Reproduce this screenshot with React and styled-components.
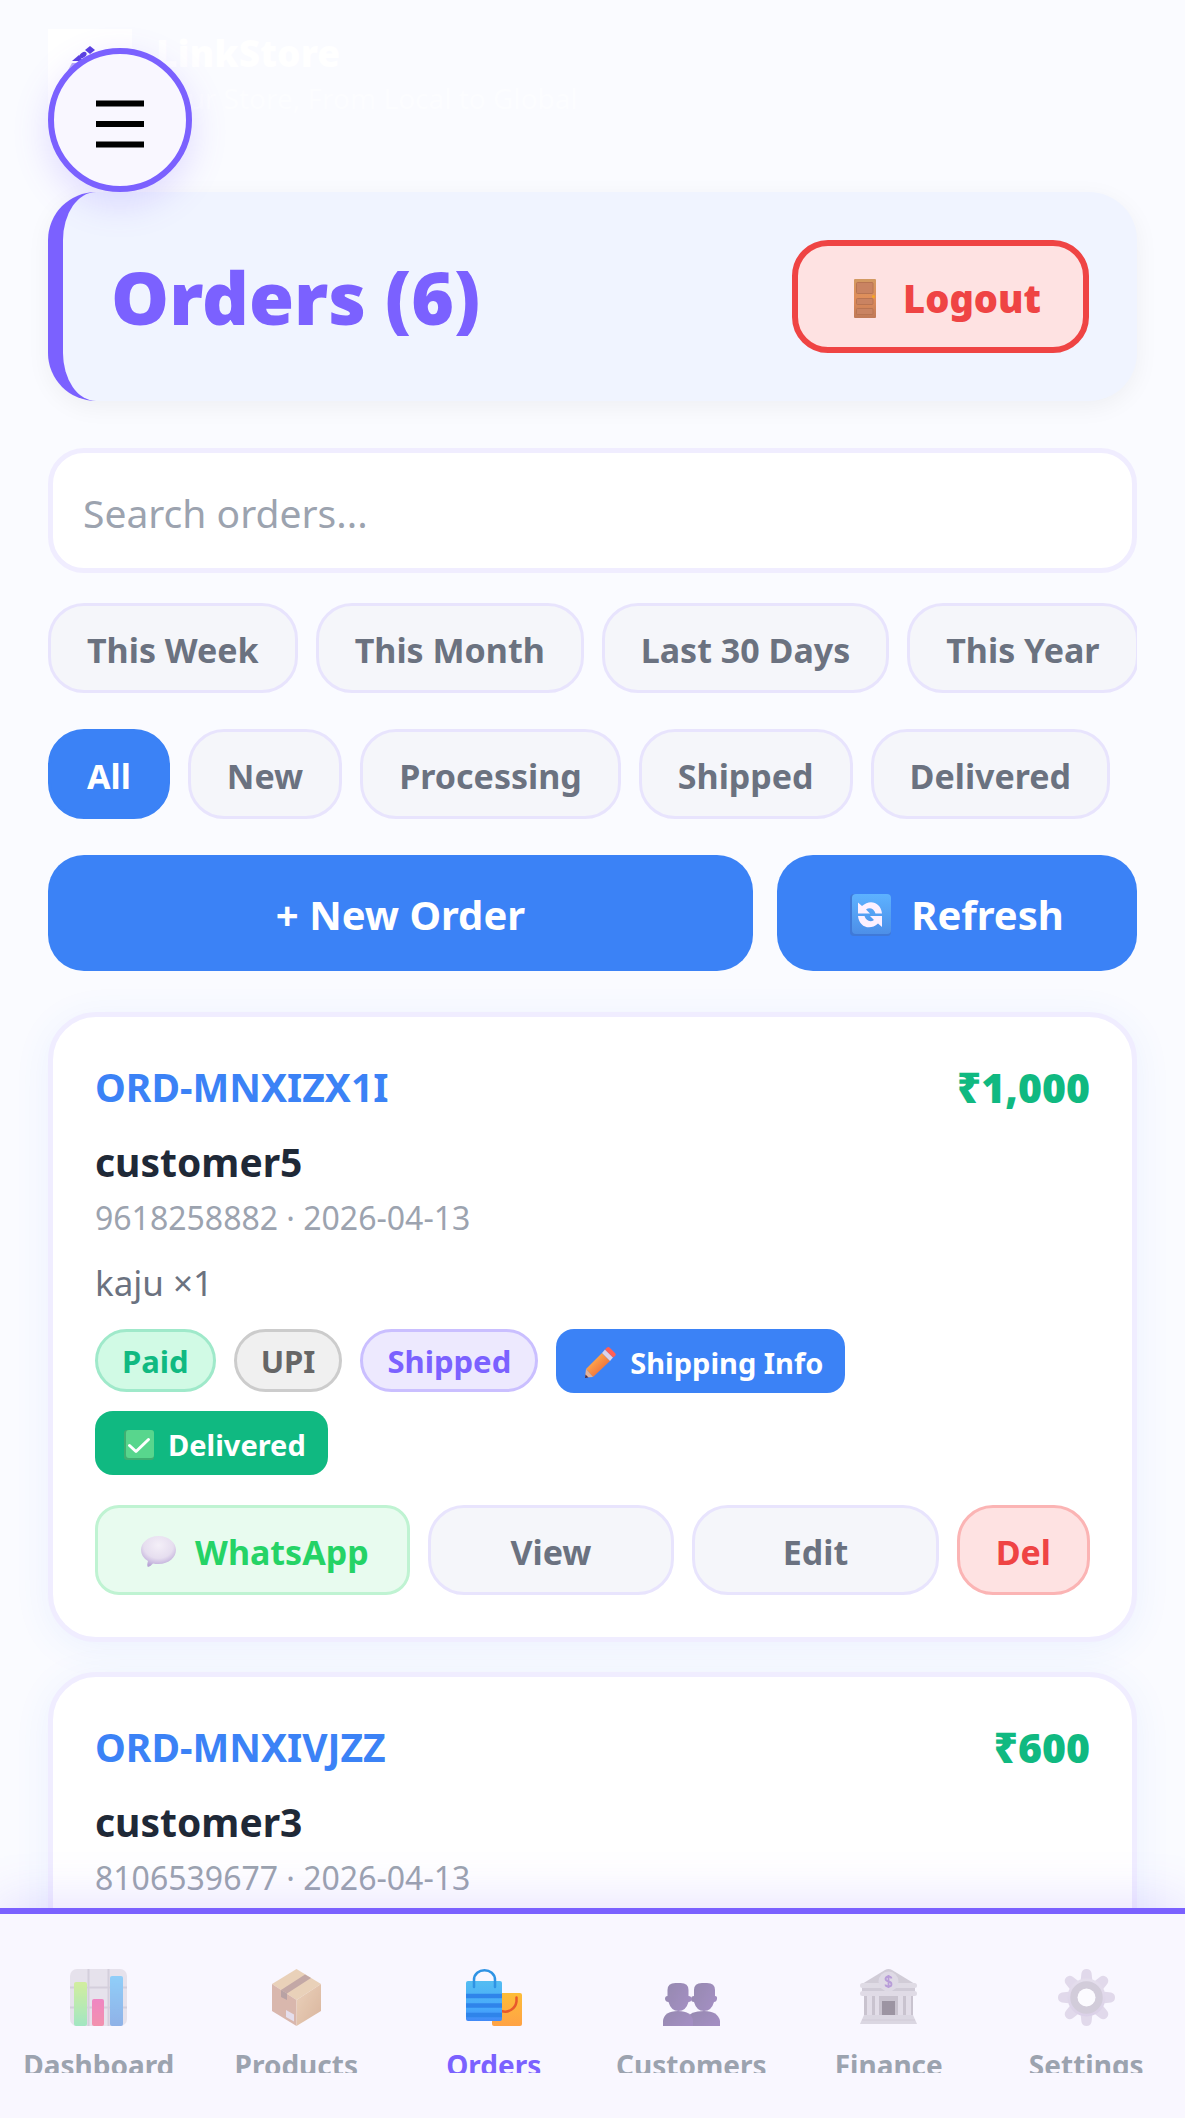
import React, { useState } from 'react';
import styled, { createGlobalStyle, css } from 'styled-components';

const GlobalStyle = createGlobalStyle`
  * {
    box-sizing: border-box;
  }

  body {
    margin: 0;
    background: #fafbff;
    font-family: "Noto Sans", "Open Sans", sans-serif;
    color: #1f2937;
  }

  button,
  input {
    font-family: inherit;
    margin: 0;
  }
`;

const Shell = styled.div`
  position: relative;
  display: flex;
  flex-direction: column;
  height: 100vh;
  overflow: hidden;
`;

const Main = styled.main`
  flex: 1;
  min-height: 0;
  overflow-y: auto;
  scrollbar-width: none;
  padding: 0 48px 48px;
`;

const Brand = styled.header`
  display: flex;
  gap: 24px;
  height: 192px;
  padding-top: 29px;
  color: #fff;
`;

const BrandLogo = styled.svg`
  flex: none;
  width: 84px;
  height: 84px;
  background: #fff;
`;

const BrandName = styled.div`
  font-size: 37px;
  line-height: 48px;
  font-weight: 900;
`;

const BrandTagline = styled.div`
  font-size: 28px;
  line-height: 42px;
  opacity: 0.5;
`;

const MenuButton = styled.button`
  position: absolute;
  top: 48px;
  left: 48px;
  z-index: 3;
  display: flex;
  align-items: center;
  justify-content: center;
  width: 144px;
  height: 144px;
  padding: 0;
  border: 6px solid #7b61ff;
  border-radius: 50%;
  background: #f9f7ff;
  box-shadow: 0 12px 36px rgba(123, 97, 255, 0.2);
  cursor: pointer;
`;

const PageHeader = styled.section`
  display: flex;
  align-items: center;
  justify-content: space-between;
  padding: 48px;
  border-left: 15px solid #7b61ff;
  border-radius: 48px;
  background: #f0f4ff;
  box-shadow: 0 6px 24px rgba(0, 0, 0, 0.05);
`;

const Title = styled.h1`
  margin: 0;
  font-size: 73px;
  line-height: 84px;
  font-weight: 900;
  color: #7b61ff;
`;

const LogoutButton = styled.button`
  display: flex;
  align-items: center;
  gap: 27px;
  height: 113px;
  padding: 3px 42px 0 56px;
  border: 6px solid #ef4444;
  border-radius: 36px;
  background: #fee2e2;
  color: #ef4444;
  font-size: 38px;
  font-weight: 900;
  cursor: pointer;
`;

const SearchInput = styled.input`
  display: block;
  width: 100%;
  height: 125px;
  margin-top: 47px;
  padding: 3px 30px 0;
  border: 5px solid #f0edff;
  border-radius: 36px;
  background: #fff;
  color: #1f2937;
  font-size: 39px;
  outline: none;

  &::placeholder {
    color: #9ca3af;
    opacity: 1;
  }
`;

const ChipRow = styled.div`
  display: flex;
  gap: 18px;
  margin-top: ${({ $top }) => $top}px;
  overflow-x: auto;
  scrollbar-width: none;
`;

const softButton = css`
  height: 90px;
  padding: 3px 36px 0;
  border: 3px solid #e8e4fd;
  border-radius: 36px;
  background: #f5f6fa;
  color: #6b7280;
  font-size: 34px;
  font-weight: 700;
  white-space: nowrap;
  cursor: pointer;
`;

const Chip = styled.button`
  ${softButton}
  flex: none;
  ${({ $active }) => $active && css`
    border-color: #3b82f6;
    background: #3b82f6;
    color: #fff;
  `}
`;

const ToolRow = styled.div`
  display: flex;
  gap: 24px;
  margin-top: 36px;
`;

const PrimaryButton = styled.button`
  display: flex;
  align-items: center;
  justify-content: center;
  gap: 20px;
  flex: ${({ $fixed }) => ($fixed ? '0 0 360px' : '1')};
  height: 116px;
  padding: 3px 0 0;
  border: none;
  border-radius: 36px;
  background: #3b82f6;
  color: #fff;
  font-size: 40px;
  font-weight: 700;
  cursor: pointer;
`;

const OrderList = styled.div`
  display: flex;
  flex-direction: column;
  gap: 30px;
  margin-top: 41px;
`;

const Card = styled.article`
  padding: 42px;
  border: 5px solid #f0edff;
  border-radius: 48px;
  background: #fff;
  box-shadow: 0 6px 36px rgba(59, 130, 246, 0.08);
`;

const CardTop = styled.div`
  display: flex;
  align-items: center;
  justify-content: space-between;
  line-height: 56px;
`;

const OrderId = styled.span`
  font-size: 39px;
  font-weight: 700;
  color: #3b82f6;
`;

const Amount = styled.span`
  font-size: 41px;
  font-weight: 900;
  color: #10b981;
`;

const Customer = styled.div`
  margin-top: 18px;
  font-size: 39px;
  line-height: 58px;
  font-weight: 700;
`;

const Meta = styled.div`
  margin-top: 4px;
  font-size: 32px;
  line-height: 46px;
  color: #9ca3af;
`;

const Items = styled.div`
  margin-top: 18px;
  font-size: 35px;
  line-height: 48px;
  color: #6b7280;
`;

const BadgeRow = styled.div`
  display: flex;
  flex-wrap: wrap;
  align-items: flex-start;
  gap: 18px;
  margin-top: 22px;
`;

const tones = {
  green: css`
    border-color: #9fe9ca;
    background: #d1fae5;
    color: #10b981;
  `,
  grey: css`
    border-color: #cccccc;
    background: #f0f0f0;
    color: #666666;
  `,
  purple: css`
    border-color: #cabfff;
    background: #ede9fe;
    color: #7b61ff;
  `,
};

const Badge = styled.span`
  height: 63px;
  padding: 0 24px;
  border: 3px solid;
  border-radius: 32px;
  font-size: 31px;
  line-height: 58px;
  font-weight: 700;
  ${({ $tone }) => tones[$tone]}
`;

const StatusButton = styled.button`
  display: flex;
  align-items: center;
  gap: 14px;
  height: 64px;
  padding: 3px 22px 0 29px;
  border: none;
  border-radius: 18px;
  background: ${({ $color }) => $color};
  color: #fff;
  font-size: 29px;
  font-weight: 700;
  cursor: pointer;
`;

const ActionRow = styled.div`
  display: flex;
  gap: 18px;
  margin-top: 30px;
`;

const ActionButton = styled.button`
  ${softButton}
  flex: 1;
`;

const WhatsAppButton = styled.button`
  ${softButton}
  display: flex;
  align-items: center;
  gap: 19px;
  padding: 3px 38px 0 43px;
  border-color: #bff3d2;
  border-radius: 24px;
  background: #e8fbef;
  color: #25d366;
`;

const DeleteButton = styled.button`
  ${softButton}
  border-color: #fbb4b4;
  background: #fee2e2;
  color: #ef4444;
`;

const NavBar = styled.nav`
  position: relative;
  z-index: 2;
  flex: none;
  display: flex;
  height: 210px;
  padding-bottom: 45px;
  border-top: 6px solid #7b61ff;
  background: #f9f7ff;
  box-shadow: 0 -6px 48px rgba(123, 97, 255, 0.18);
`;

const NavLink = styled.a`
  flex: 1 1 0;
  display: flex;
  flex-direction: column;
  align-items: center;
  gap: 18px;
  padding-top: 55px;
  overflow: hidden;
  color: ${({ $active }) => ($active ? '#7b61ff' : '#9ca3af')};
  font-size: 28px;
  line-height: 42px;
  font-weight: 700;
  text-decoration: none;

  svg {
    flex: none;
    opacity: ${({ $active }) => ($active ? 1 : 0.6)};
  }
`;

const MenuIcon = () => (
  <svg width="48" height="56" viewBox="0 0 48 56" aria-hidden="true">
    <path d="M0 11.500h48M0 32h48M0 52.500h48" stroke="#000" strokeWidth="6" />
  </svg>
);

const DoorIcon = () => (
  <svg width="22" height="39" viewBox="0 0 22 39" aria-hidden="true">
    <defs>
      <linearGradient id="door" x1="0" y1="0" x2="0" y2="1">
        <stop offset="0" stopColor="#d29a62" />
        <stop offset="0.5" stopColor="#e08d5a" />
        <stop offset="1" stopColor="#c07a58" />
      </linearGradient>
    </defs>
    <rect width="22" height="39" rx="1" fill="url(#door)" />
    <g fill="#c98362" stroke="#b87452">
      <rect x="2.500" y="3.500" width="16.500" height="11" rx="1" />
      <rect x="2.500" y="19.500" width="16.500" height="6" rx="1" />
      <rect x="2.500" y="29.500" width="16.500" height="6" rx="1" />
    </g>
    <circle cx="19.500" cy="17.500" r="1.500" fill="#f5a623" />
  </svg>
);

const RefreshIcon = () => (
  <svg width="41" height="42" viewBox="0 0 41 42" aria-hidden="true">
    <defs>
      <linearGradient id="refresh" x1="0" y1="0" x2="0" y2="1">
        <stop offset="0" stopColor="#5db2ff" />
        <stop offset="1" stopColor="#4d8fe8" />
      </linearGradient>
    </defs>
    <rect width="41" height="42" rx="4" fill="#3f79d8" />
    <rect x="2" width="39" height="40" rx="4" fill="url(#refresh)" />
    <g fill="#fdf0ff">
      <path d="M8 8.500v11h12l-4-4c3.500-2.500 8-1 9.500 4h6.500c-1-11-12-15-20-7.500z" />
      <path d="M32 33v-11H20l4 4c-3.500 2.500-8 1-9.500-4H8c1 11 12 15 20 7.500z" />
    </g>
  </svg>
);

const PencilIcon = () => (
  <svg width="31" height="31" viewBox="0 0 31 31" aria-hidden="true">
    <defs>
      <linearGradient id="pencil" x1="0" y1="0" x2="1" y2="1">
        <stop offset="0.3" stopColor="#ffa44a" />
        <stop offset="0.800" stopColor="#ea6a3c" />
      </linearGradient>
    </defs>
    <path d="M1 22 17 6l8 8L8 30z" fill="url(#pencil)" />
    <path d="M1 22 0 30.500 8 30z" fill="#e2b29a" />
    <path d="M.5 27.500 0 31l3.500-.5z" fill="#3d2b4f" />
    <path d="m17 6 3-3.500 8 8-3 3.500z" fill="#dcd3ea" />
    <path d="m20 2.500 2-2q1.500-1 3 .5l5 5q1.500 1.500 0 3l-2 1.500z" fill="#ff5f57" />
  </svg>
);

const CheckIcon = () => (
  <svg width="30" height="30" viewBox="0 0 30 30" aria-hidden="true">
    <rect width="30" height="30" rx="3" fill="#3fae72" />
    <rect x="2" width="28" height="28" rx="3" fill="#58d68d" />
    <path d="m5.500 15.500 6.500 6 12.500-12" fill="none" stroke="#fff" strokeWidth="3" strokeLinecap="round" strokeLinejoin="round" />
  </svg>
);

const BubbleIcon = () => (
  <svg width="35" height="31" viewBox="0 -2 35 31" aria-hidden="true">
    <defs>
      <radialGradient id="bubble" cx="0.500" cy="0.300" r="0.700">
        <stop offset="0" stopColor="#f4eff8" />
        <stop offset="0.600" stopColor="#e6deef" />
        <stop offset="1" stopColor="#b7a3d6" />
      </radialGradient>
    </defs>
    <path d="M17.500-2C28-2 35 5 35 12S28 26 17.500 26q-3 0-5.500-.5Q10 28 7 29q-1.500-1 0-6Q0 19 0 12C0 5 7-2 17.500-2z" fill="url(#bubble)" />
  </svg>
);

const ChartIcon = () => (
  <svg width="57" height="57" viewBox="0 0 57 57" aria-hidden="true">
    <defs>
      <linearGradient id="barGreen" x1="0" y1="0" x2="0" y2="1">
        <stop offset="0" stopColor="#b9e860" />
        <stop offset="1" stopColor="#69dc9a" />
      </linearGradient>
      <linearGradient id="barPink" x1="0" y1="0" x2="0" y2="1">
        <stop offset="0" stopColor="#ea3c9c" />
        <stop offset="1" stopColor="#ee4f78" />
      </linearGradient>
      <linearGradient id="barBlue" x1="0" y1="0" x2="0" y2="1">
        <stop offset="0" stopColor="#4cb4f6" />
        <stop offset="1" stopColor="#4a84d8" />
      </linearGradient>
    </defs>
    <rect width="57" height="57" rx="7" fill="#dad5e0" />
    <path d="M18.500 0v57M38.500 0v57M0 18.500h57M0 38.500h57" stroke="#bdb6c6" strokeWidth="2" />
    <rect x="4" y="13" width="13" height="44" rx="2" fill="url(#barGreen)" />
    <rect x="22" y="30" width="12" height="27" rx="2" fill="url(#barPink)" />
    <rect x="40" y="7" width="13" height="50" rx="2" fill="url(#barBlue)" />
  </svg>
);

const BoxIcon = () => (
  <svg width="57" height="57" viewBox="0 0 57 57" aria-hidden="true">
    <defs>
      <linearGradient id="boxSide" x1="0" y1="0" x2="1" y2="1">
        <stop offset="0" stopColor="#e2b98e" />
        <stop offset="1" stopColor="#c58a5e" />
      </linearGradient>
    </defs>
    <path d="m28.500 0 24.500 15-24.500 16L4 15z" fill="#e0b98c" />
    <path d="M4 15l24.500 16v26L4 42z" fill="#c58e78" />
    <path d="M53 15 28.500 31v26L53 42z" fill="url(#boxSide)" />
    <path d="m13 21 24-15.500 6 3.500-24 15.500z" fill="#a0746c" />
    <path d="m13 21 6 3.500V31l-6-3z" fill="#8d6a68" />
    <path d="m18 41 8 4.500v7L18 48z" fill="#d9cfe0" />
  </svg>
);

const BagsIcon = () => (
  <svg width="57" height="57" viewBox="0 0 57 57" aria-hidden="true">
    <defs>
      <linearGradient id="bagBlue" x1="0" y1="0" x2="0" y2="1">
        <stop offset="0" stopColor="#54bdf2" />
        <stop offset="0.700" stopColor="#46a8fb" />
        <stop offset="1" stopColor="#4188f6" />
      </linearGradient>
      <linearGradient id="bagOrange" x1="0" y1="0" x2="0" y2="1">
        <stop offset="0" stopColor="#fdbd38" />
        <stop offset="1" stopColor="#ffa245" />
      </linearGradient>
    </defs>
    <rect x="27" y="24" width="30" height="33" rx="2" fill="url(#bagOrange)" />
    <path d="M51.500 28.500v4c-1 7-8 12-15 9.500" fill="none" stroke="#e8582c" strokeWidth="2.500" strokeLinecap="round" />
    <rect x="1" y="12" width="36" height="40" rx="2" fill="url(#bagBlue)" />
    <path d="M1 27h36M1 36.500h36M1 46h36" stroke="#2f84ea" strokeWidth="4.500" />
    <path d="M9 18v-7c0-13 21-13 21 0v7" fill="none" stroke="#2f93e4" strokeWidth="2.500" strokeLinecap="round" />
  </svg>
);

const PeopleIcon = () => (
  <svg width="57" height="57" viewBox="0 0 57 57" aria-hidden="true">
    <defs>
      <linearGradient id="people" x1="0" y1="0" x2="1" y2="0.600">
        <stop offset="0" stopColor="#54417a" />
        <stop offset="1" stopColor="#6b4a9a" />
      </linearGradient>
    </defs>
    <g fill="url(#people)">
      <path d="M31 21q0-7 8-7h5q8 0 8 7v6q2.500 0 2 3-.5 3-3 3-2.500 9-10 9t-10-9q-3 0-3-3t3-3z" />
      <path d="M24 57v-8q3-7 17-7t16 10v5z" />
      <path d="M4.500 21q0-7 8-7h5q8 0 8 7v6q3 0 3 3t-3 3q-2.500 9-10 9t-10-9q-3 0-3.500-3 0-3 2.500-3z" />
      <path d="M0 57v-5q1-10 15-10t15 10v5z" />
    </g>
  </svg>
);

const BankIcon = () => (
  <svg width="57" height="57" viewBox="0 0 57 57" aria-hidden="true">
    <path d="M25 1q3.500-2 7 0l23 14H2z" fill="#b7b0be" />
    <rect x="4" y="18" width="49" height="29" fill="#aaa2b0" />
    <rect y="14" width="57" height="5" rx="2.500" fill="#cfc9d5" />
    <rect x="2" y="19" width="53" height="4" fill="#b5aebd" />
    <rect y="22" width="57" height="5" rx="2.500" fill="#d0cad6" />
    <path d="M7 27h5v20H7zM15 27h4v20h-4zM38 27h5v20h-5zM46 27h5v20h-5z" fill="#d3cdd9" />
    <rect x="22" y="32" width="13" height="15" fill="#5f5366" />
    <path d="M4 46h49l4 9H0z" fill="#c8c2cf" />
    <path d="M2 51h53" stroke="#b6afbe" />
    <circle cx="28.500" cy="12.500" r="10" fill="#cdc6d4" />
    <path d="M31.500 9.500q-.5-2-3-2t-3 2.300q0 2 3 2.700t3 2.700q0 2.300-3 2.300t-3-2M28.500 6v13" fill="none" stroke="#8d62c0" strokeWidth="1.800" />
  </svg>
);

const GearIcon = () => (
  <svg width="57" height="57" viewBox="0 0 57 57" aria-hidden="true">
    <defs>
      <linearGradient id="gear" x1="0" y1="0" x2="0" y2="57" gradientUnits="userSpaceOnUse">
        <stop offset="0" stopColor="#dcd5e4" />
        <stop offset="1" stopColor="#c3b1d6" />
      </linearGradient>
    </defs>
    <g fill="#d2c6de">
      {[0, 45, 90, 135].map((angle) => (
        <path
          key={ angle }
          d="M23.500 4q1-4 5-4t5 4l1.500 13v23l-1.500 13q-1 4-5 4t-5-4L22 40V17z"
          transform={ `rotate(${angle} 28.500 28.500)` }
        />
      ))}
      <circle cx="28.500" cy="28.500" r="19" fill="url(#gear)" />
    </g>
    <circle cx="28.500" cy="28.500" r="12.500" fill="none" stroke="#b9b0c2" strokeWidth="7.500" />
    <circle cx="28.500" cy="28.500" r="9" fill="#fff" />
  </svg>
);

const periods = ['This Week', 'This Month', 'Last 30 Days', 'This Year'];
const statuses = ['All', 'New', 'Processing', 'Shipped', 'Delivered'];

const orders = [
  { id: 'ORD-MNXIZX1I', customer: 'customer5', phone: '9618258882', date: '2026-04-13', amount: '₹1,000', items: 'kaju ×1' },
  { id: 'ORD-MNXIVJZZ', customer: 'customer3', phone: '8106539677', date: '2026-04-13', amount: '₹600', items: 'kaju ×1' },
];

const navItems = [
  { label: 'Dashboard', Icon: ChartIcon },
  { label: 'Products', Icon: BoxIcon },
  { label: 'Orders', Icon: BagsIcon },
  { label: 'Customers', Icon: PeopleIcon },
  { label: 'Finance', Icon: BankIcon },
  { label: 'Settings', Icon: GearIcon },
];

function OrderCard({ order }) {
  return (
    <Card>
      <CardTop>
        <OrderId>{order.id}</OrderId>
        <Amount>{order.amount}</Amount>
      </CardTop>
      <Customer>{order.customer}</Customer>
      <Meta>{`${order.phone} · ${order.date}`}</Meta>
      <Items>{order.items}</Items>
      <BadgeRow>
        <Badge $tone="green">Paid</Badge>
        <Badge $tone="grey">UPI</Badge>
        <Badge $tone="purple">Shipped</Badge>
        <StatusButton type="button" $color="#3b82f6">
          <PencilIcon />
          Shipping Info
        </StatusButton>
        <StatusButton type="button" $color="#10b981">
          <CheckIcon />
          Delivered
        </StatusButton>
      </BadgeRow>
      <ActionRow>
        <WhatsAppButton type="button">
          <BubbleIcon />
          WhatsApp
        </WhatsAppButton>
        <ActionButton type="button">View</ActionButton>
        <ActionButton type="button">Edit</ActionButton>
        <DeleteButton type="button">Del</DeleteButton>
      </ActionRow>
    </Card>
  );
}

function App() {
  const [status, setStatus] = useState('All');
  const [period, setPeriod] = useState('');
  const [search, setSearch] = useState('');

  return (
    <Shell>
      <GlobalStyle />
      <MenuButton type="button" aria-label="Menu">
        <MenuIcon />
      </MenuButton>
      <Main>
        <Brand>
          <BrandLogo viewBox="0 0 84 84" aria-hidden="true">
            <path d="m42 17 5 4-5 4-5-4z" fill="#5a3fe0" />
            <path d="m24 32 7-6 4 6z" fill="#5a3fe0" />
            <ellipse cx="35" cy="26" rx="4" ry="2.500" transform="rotate(-35 35 26)" fill="#5a3fe0" />
            <path d="m24 34-5 9 12-9z" fill="#b9acf5" />
          </BrandLogo>
          <div>
            <BrandName>LinkStore</BrandName>
            <BrandTagline>Your Store, From Local to Global</BrandTagline>
          </div>
        </Brand>
        <PageHeader>
          <Title>Orders (6)</Title>
          <LogoutButton type="button">
            <DoorIcon />
            Logout
          </LogoutButton>
        </PageHeader>
        <SearchInput
          type="text"
          aria-label="Search orders"
          placeholder="Search orders..."
          value={ search }
          onChange={ ({ target }) => setSearch(target.value) }
        />
        <ChipRow $top={ 30 }>
          {periods.map((name) => (
            <Chip
              key={ name }
              type="button"
              $active={ period === name }
              onClick={ () => setPeriod(name) }
            >
              {name}
            </Chip>
          ))}
        </ChipRow>
        <ChipRow $top={ 36 }>
          {statuses.map((name) => (
            <Chip
              key={ name }
              type="button"
              $active={ status === name }
              onClick={ () => setStatus(name) }
            >
              {name}
            </Chip>
          ))}
        </ChipRow>
        <ToolRow>
          <PrimaryButton type="button">+ New Order</PrimaryButton>
          <PrimaryButton type="button" $fixed>
            <RefreshIcon />
            Refresh
          </PrimaryButton>
        </ToolRow>
        <OrderList>
          {orders.map((order) => <OrderCard key={ order.id } order={ order } />)}
        </OrderList>
      </Main>
      <NavBar>
        {navItems.map(({ label, Icon }) => (
          <NavLink key={ label } href={ `#${label.toLowerCase()}` } $active={ label === 'Orders' }>
            <Icon />
            <span>{label}</span>
          </NavLink>
        ))}
      </NavBar>
    </Shell>
  );
}

export default App;
